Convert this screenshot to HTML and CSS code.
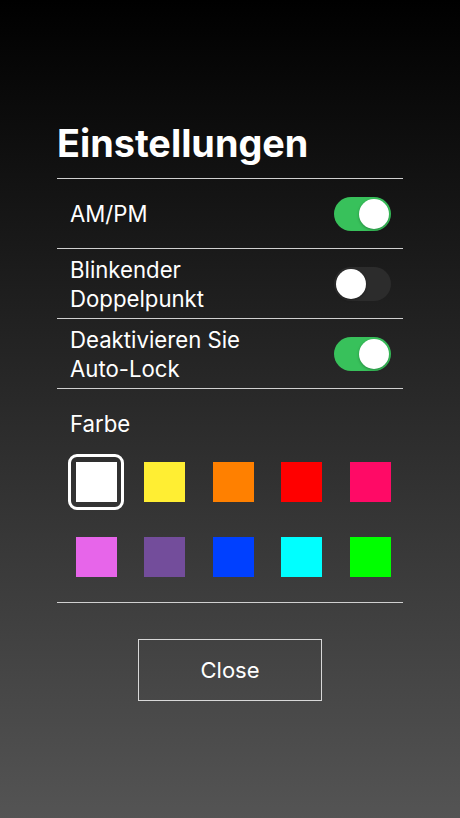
FILE: index.html
```html
<!DOCTYPE html>
<html lang="de">
  <head>
    <meta charset="UTF-8" />
    <meta name="viewport" content="width=device-width, initial-scale=1.0" />
    <title>Einstellungen</title>
    <link rel="stylesheet" href="styles.css">
  </head>
  <body>
    <div class="settings">
      <h1 class="title">Einstellungen</h1>

      <div class="row">
        <span class="label">AM/PM</span>
        <span class="switch on"><span class="knob"></span></span>
      </div>
      <div class="row">
        <span class="label">Blinkender<br />Doppelpunkt</span>
        <span class="switch"><span class="knob"></span></span>
      </div>
      <div class="row">
        <span class="label">Deaktivieren Sie<br />Auto-Lock</span>
        <span class="switch on"><span class="knob"></span></span>
      </div>

      <div class="colors">
        <div class="label">Farbe</div>
        <div class="swatches">
          <span class="cell selected"><span class="swatch" style="background: #ffffff"></span></span>
          <span class="cell"><span class="swatch" style="background: #ffee33"></span></span>
          <span class="cell"><span class="swatch" style="background: #ff8000"></span></span>
          <span class="cell"><span class="swatch" style="background: #ff0000"></span></span>
          <span class="cell"><span class="swatch" style="background: #ff0a66"></span></span>
          <span class="cell"><span class="swatch" style="background: #e765ea"></span></span>
          <span class="cell"><span class="swatch" style="background: #734d9b"></span></span>
          <span class="cell"><span class="swatch" style="background: #0040ff"></span></span>
          <span class="cell"><span class="swatch" style="background: #00ffff"></span></span>
          <span class="cell"><span class="swatch" style="background: #00ff00"></span></span>
        </div>
      </div>

      <button class="close">Close</button>
    </div>
  </body>
</html>
```

FILE: styles.css
```css
html {
  height: 100%;
}

body {
  margin: 0;
  min-height: 100%;
  background: linear-gradient(to bottom, #000000 0%, #545454 100%);
  color: #fff;
  font-family: Inter, "Liberation Sans", Arial, sans-serif;
}

.settings {
  width: 346px;
  margin: 0 auto;
  padding-top: 121px;
}

.title {
  margin: 0;
  font-size: 37.8px;
  font-weight: bold;
  line-height: 44px;
  padding-bottom: 13px;
  border-bottom: 1px solid #d0d0d0;
}

.row {
  display: flex;
  align-items: center;
  justify-content: space-between;
  height: 69px;
  padding: 0 12px 0 13px;
  border-bottom: 1px solid #d0d0d0;
}

.label {
  font-size: 22.2px;
  line-height: 29px;
}

.switch {
  position: relative;
  width: 57px;
  height: 34px;
  border-radius: 17px;
  background: #2c2c2c;
}

.switch.on {
  background: #38c15b;
}

.knob {
  position: absolute;
  top: 2px;
  left: 2px;
  width: 30px;
  height: 30px;
  border-radius: 50%;
  background: #fff;
  box-shadow: 0 1px 3px rgba(0, 0, 0, 0.3);
}

.switch.on .knob {
  left: 25px;
}

.colors {
  padding: 20px 0 17px 13px;
  border-bottom: 1px solid #d0d0d0;
}

.swatches {
  display: grid;
  grid-template-columns: repeat(5, 56px);
  column-gap: 12.5px;
  row-gap: 19px;
  margin: 16px 0 0 -2px;
}

.cell {
  display: flex;
  align-items: center;
  justify-content: center;
  width: 56px;
  height: 56px;
  box-sizing: border-box;
  border-radius: 9px;
}

.cell.selected {
  border: 3px solid #fff;
}

.swatch {
  width: 41px;
  height: 40px;
}

.close {
  display: block;
  width: 184px;
  height: 62px;
  margin: 36px auto 0;
  background: transparent;
  border: 1px solid #d8d8d8;
  color: #fff;
  font-family: Inter, "Liberation Sans", Arial, sans-serif;
  font-size: 22px;
}
```
